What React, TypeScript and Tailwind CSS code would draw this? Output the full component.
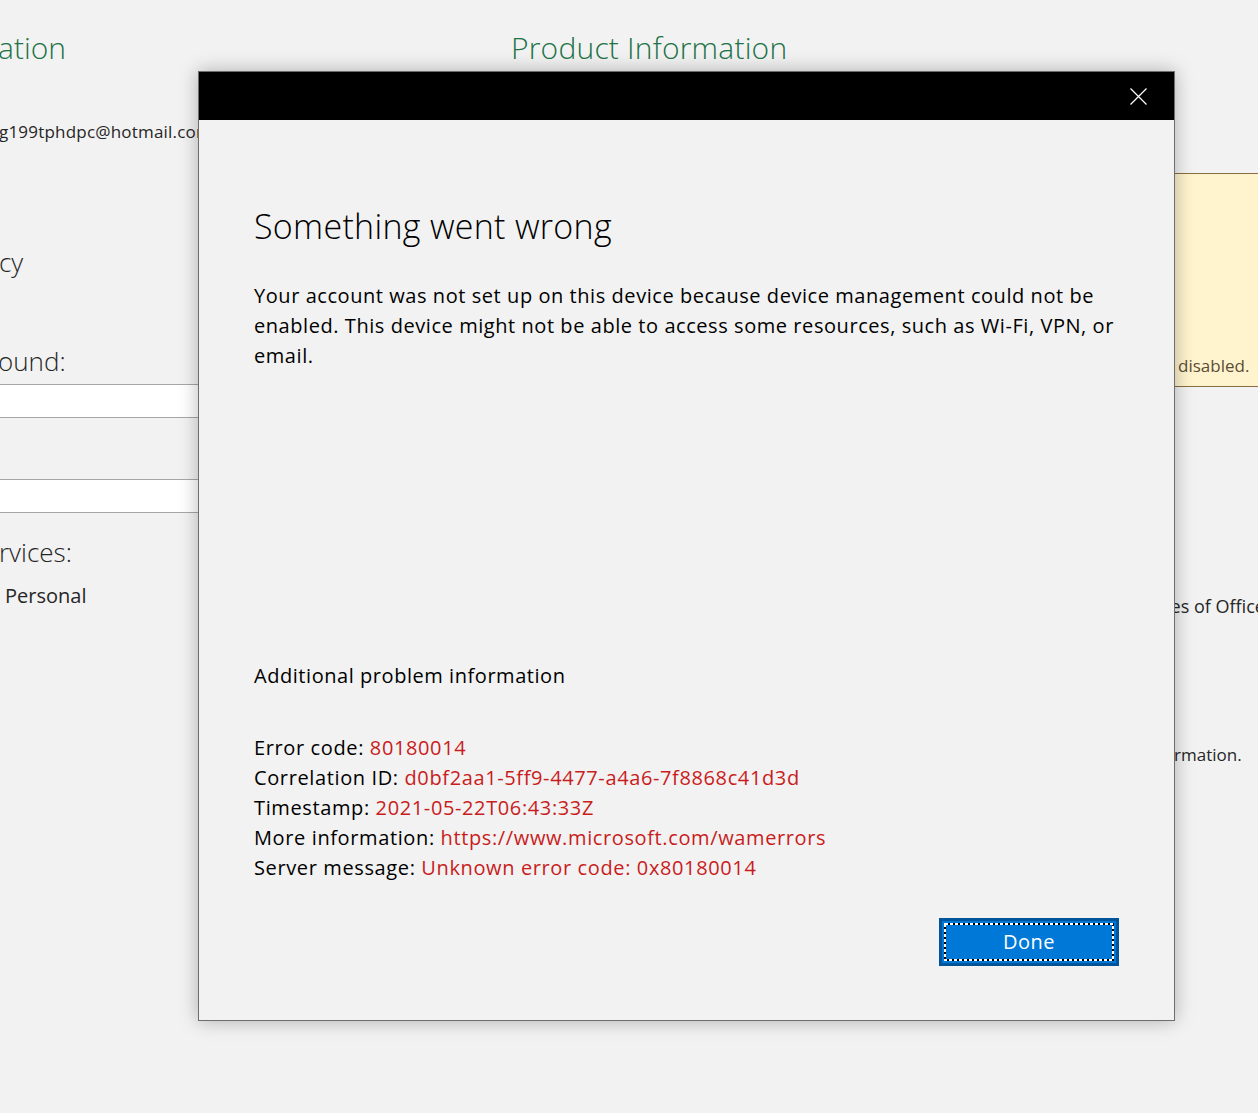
import React from "react";

const font = { fontFamily: '"Open Sans", "Noto Sans", sans-serif' };

function CloseIcon() {
  return (
    <svg width="17" height="17" viewBox="0 0 17 17" fill="none">
      <path d="M0.5 0.5 L16.5 16.5 M16.5 0.5 L0.5 16.5" stroke="white" strokeWidth="1.2" />
    </svg>
  );
}

function DoneButton() {
  return (
    <button className="relative w-[180px] h-[48px] bg-[#0078d7] border-[3px] border-[#00549a] text-white text-[20px] leading-none flex items-center justify-center">
      <svg className="absolute left-[2px] top-[2px]" width="170" height="38" viewBox="0 0 170 38">
        <rect x="1" y="1" width="168" height="36" fill="none" stroke="black" strokeWidth="2" />
        <rect x="1" y="1" width="168" height="36" fill="none" stroke="white" strokeWidth="2" strokeDasharray="3 2" />
      </svg>
      <span className="relative -mt-[1px] tracking-[0.5px]">Done</span>
    </button>
  );
}

export default function App() {
  return (
    <div className="relative w-full h-[1113px] bg-[#f2f2f2] overflow-hidden text-[#262626]" style={font}>
      {/* Background page */}
      <div className="flex h-full">
        <div className="w-[230px] shrink-0 flex flex-col">
          <div className="mt-[28px] text-[30px] leading-[40px] font-light text-[#217346] -ml-[2px]">ation</div>
          <div className="mt-[52px] text-[17px] leading-[24px] whitespace-nowrap -ml-[1px] tracking-[0.2px]">g199tphdpc@hotmail.com</div>
          <div className="mt-[100px] text-[26px] leading-[36px] font-light -ml-[1px]">cy</div>
          <div className="mt-[63px] text-[26px] leading-[36px] font-light -ml-[2px]">ound:</div>
          <div className="mt-[5px] h-[34px] bg-white border-y border-[#a6a6a6]"></div>
          <div className="mt-[61px] h-[34px] bg-white border-y border-[#a6a6a6]"></div>
          <div className="mt-[21px] text-[26px] leading-[36px] font-light -ml-[1px]">rvices:</div>
          <div className="mt-[12px] ml-[5px] text-[20px] leading-[28px]">Personal</div>
        </div>
        <div className="flex-1 flex flex-col">
          <div className="mt-[28px] ml-[281px] text-[30px] leading-[40px] font-light text-[#217346] whitespace-nowrap tracking-[0.2px]">Product Information</div>
        </div>
        <div className="w-[84px] shrink-0 flex flex-col">
          <div className="mt-[173px] h-[214px] bg-[#fff4ce] border-y border-[#8c6d3f] flex flex-col justify-end pb-[8px] pl-[4px]">
            <span className="text-[17px] leading-[24px] text-[#5b4d35] whitespace-nowrap">disabled.</span>
          </div>
          <div className="mt-[206px] -ml-[12px] text-[18px] leading-[26px] whitespace-nowrap">ses of Office</div>
          <div className="mt-[124px] text-[17px] leading-[24px] whitespace-nowrap">rmation.</div>
        </div>
      </div>

      {/* Modal dialog */}
      <div className="absolute left-[198px] top-[71px] w-[977px] h-[950px] bg-[#f2f2f2] border border-[#6e6e6e] shadow-[0_0_18px_rgba(0,0,0,0.28)] flex flex-col">
        <div className="h-[48px] bg-black flex items-center justify-end pr-[27px] shrink-0">
          <CloseIcon />
        </div>
        <div className="flex-1 flex flex-col px-[55px] text-black">
          <h1 className="mt-[85px] text-[34px] leading-[42px] font-light whitespace-nowrap tracking-[0.3px]">Something went wrong</h1>
          <p className="mt-[34px] text-[20px] leading-[30px] whitespace-nowrap tracking-[0.56px]">
            Your account was not set up on this device because device management could not be
            <br />
            enabled. This device might not be able to access some resources, such as Wi-Fi, VPN, or
            <br />
            email.
          </p>
          <p className="mt-[290px] text-[20px] leading-[30px] tracking-[0.55px]">Additional problem information</p>
          <div className="mt-[42px] text-[20px] leading-[30px] whitespace-nowrap tracking-[0.62px]">
            <div>
              Error code: <span className="text-[#c91c1c]">80180014</span>
            </div>
            <div>
              Correlation ID: <span className="text-[#c91c1c]">d0bf2aa1-5ff9-4477-a4a6-7f8868c41d3d</span>
            </div>
            <div>
              Timestamp: <span className="text-[#c91c1c]">2021-05-22T06:43:33Z</span>
            </div>
            <div>
              More information: <span className="text-[#c91c1c]">https://www.microsoft.com/wamerrors</span>
            </div>
            <div>
              Server message: <span className="text-[#c91c1c]">Unknown error code: 0x80180014</span>
            </div>
          </div>
          <div className="mt-[35px] flex justify-end">
            <DoneButton />
          </div>
        </div>
      </div>
    </div>
  );
}
